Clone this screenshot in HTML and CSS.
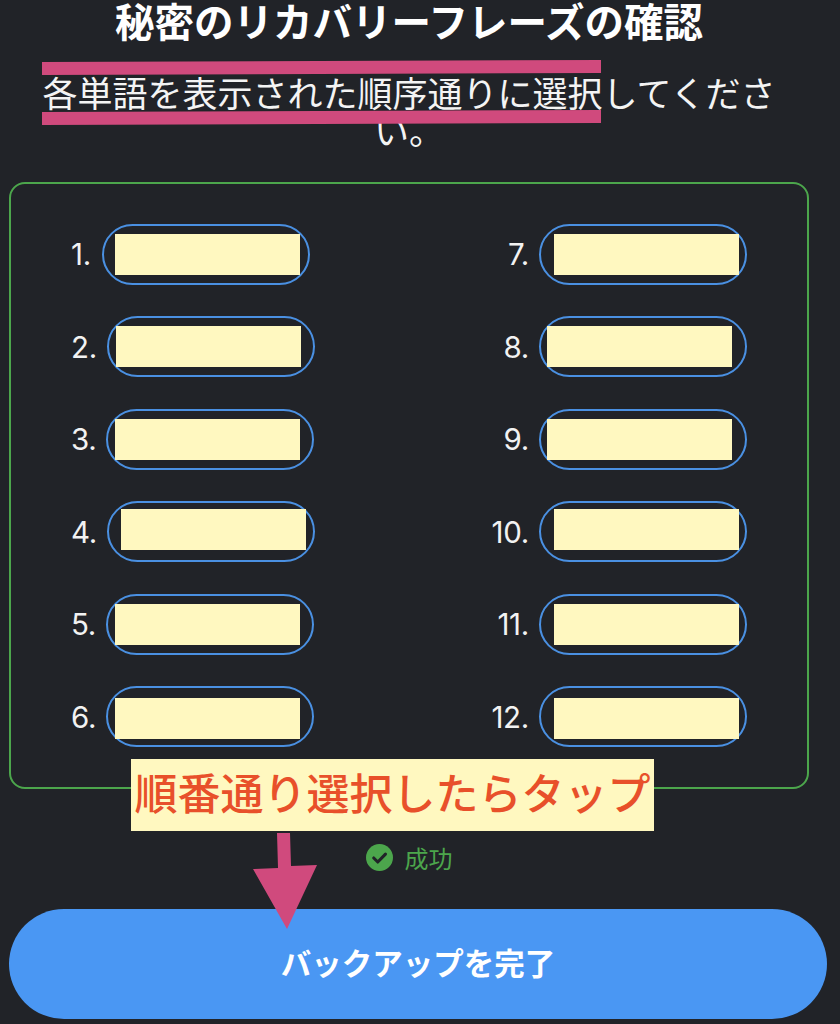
FILE: index.html
```html
<!DOCTYPE html>
<html lang="ja">
<head>
<meta charset="utf-8">
<title>秘密のリカバリーフレーズの確認</title>
<link rel="stylesheet" href="styles.css">
</head>
<body>
<main class="page">
  <h1 class="title">秘密のリカバリーフレーズの確認</h1>
  <p class="subtitle">各単語を表示された順序通りに選択してください。</p>

  <section class="words">
    <div class="word"><span class="num one">1.</span><div class="pill"><i class="mask x12 y10"></i></div></div>
    <div class="word"><span class="num">2.</span><div class="pill"><i class="mask x8 y9"></i></div></div>
    <div class="word"><span class="num">3.</span><div class="pill"><i class="mask x8 y10"></i></div></div>
    <div class="word"><span class="num">4.</span><div class="pill"><i class="mask x13 y7"></i></div></div>
    <div class="word"><span class="num">5.</span><div class="pill"><i class="mask x8 y10"></i></div></div>
    <div class="word"><span class="num">6.</span><div class="pill"><i class="mask x8 y11"></i></div></div>
    <div class="word right"><span class="num">7.</span><div class="pill"><i class="mask x15 y10"></i></div></div>
    <div class="word right"><span class="num">8.</span><div class="pill"><i class="mask x8 y9"></i></div></div>
    <div class="word right"><span class="num">9.</span><div class="pill"><i class="mask x8 y10"></i></div></div>
    <div class="word right"><span class="num">10.</span><div class="pill"><i class="mask x15 y7"></i></div></div>
    <div class="word right"><span class="num">11.</span><div class="pill"><i class="mask x15 y10"></i></div></div>
    <div class="word right"><span class="num">12.</span><div class="pill"><i class="mask x15 y11"></i></div></div>
  </section>

  <div class="status">
    <svg class="status-icon" viewBox="0 0 28 28" aria-hidden="true">
      <circle cx="14" cy="14" r="14" fill="#4ca64c"/>
      <path d="M8 14.5l4.2 4.2L20.2 10.5" fill="none" stroke="#212328" stroke-width="3.2" stroke-linecap="round" stroke-linejoin="round"/>
    </svg>
    <span>成功</span>
  </div>

  <button class="cta" type="button">バックアップを完了</button>

  <div class="bar bar-top"></div>
  <div class="bar bar-bottom"></div>
  <div class="note">順番通り選択したらタップ</div>
  <svg class="arrow" viewBox="0 0 70 100" aria-hidden="true">
    <polygon points="25,0 38,0 39,33 65,32 35,96 1,36 26,35" fill="#d04a7d"/>
  </svg>
</main>
</body>
</html>
```

FILE: styles.css
```css
* { box-sizing: border-box; }

html, body {
  margin: 0;
  padding: 0;
  background: #212328;
}

body {
  color: #fff;
  font-family: "Noto Sans CJK JP", "Noto Sans", sans-serif;
  overflow: hidden;
}

.page {
  position: relative;
  width: 840px;
  height: 1024px;
  padding: 0 31px 0 9px;
}

.title {
  margin: 0;
  font-size: 39.5px;
  line-height: 36px;
  padding-top: 2px;
  font-weight: 700;
  text-align: center;
  white-space: nowrap;
}

.subtitle {
  margin: 35px 0 33px;
  padding: 0 17px;
  font-size: 35px;
  line-height: 38px;
  font-weight: 400;
  text-align: center;
  color: #f4f4f4;
}

.words {
  display: grid;
  grid-template-columns: 1fr 1fr;
  grid-template-rows: repeat(6, 61px);
  grid-auto-flow: column;
  row-gap: 31.5px;
  height: 607px;
  padding: 39.5px 60px 0 60px;
  border: 2px solid #4ca64c;
  border-radius: 16px;
}

.word {
  display: flex;
  align-items: center;
  gap: 10px;
}

.word.right { justify-content: flex-end; }

.num {
  font-family: Inter, "Liberation Sans", sans-serif;
  font-size: 29.5px;
  letter-spacing: -0.3px;
  color: #f2f2f2;
}

.num.one { margin-right: 1.5px; }

.pill {
  position: relative;
  flex: none;
  width: 208px;
  height: 61px;
  border: 2px solid #4a90e2;
  border-radius: 30.5px;
}

.mask {
  position: absolute;
  width: 185px;
  height: 41px;
  margin-top: 0.5px;
  background: #fff8c0;
}

.word:not(.right) .mask { margin-left: 1px; }

.x8  { left: 6px; }
.x12 { left: 10px; }
.x13 { left: 11px; }
.x15 { left: 13px; }
.y7  { top: 5px; }
.y9  { top: 7px; }
.y10 { top: 8px; }
.y11 { top: 9px; }

.status {
  display: flex;
  align-items: center;
  justify-content: center;
  gap: 12px;
  height: 34px;
  margin-top: 51px;
  font-size: 24px;
  color: #4ca64c;
}

.status-icon {
  width: 27px;
  height: 27px;
}

.cta {
  display: block;
  width: 818px;
  height: 110px;
  margin-top: 35px;
  padding: 0 0 4px;
  border: 0;
  border-radius: 55px;
  background: #4a97f3;
  color: #fff;
  font-family: inherit;
  font-size: 30.5px;
  font-weight: 700;
}

.bar {
  position: absolute;
  left: 42px;
  width: 559px;
  height: 13px;
  background: #d04a7d;
  transform: rotate(-0.2deg);
}

.bar-top { top: 61px; }
.bar-bottom { top: 111px; }

.note {
  position: absolute;
  left: 131px;
  top: 759px;
  width: 523px;
  height: 72px;
  background: #fff8c0;
  color: #e8502a;
  font-size: 43px;
  font-weight: 500;
  line-height: 64px;
  text-align: center;
  white-space: nowrap;
}

.arrow {
  position: absolute;
  left: 252px;
  top: 833px;
  width: 70px;
  height: 100px;
}
```
